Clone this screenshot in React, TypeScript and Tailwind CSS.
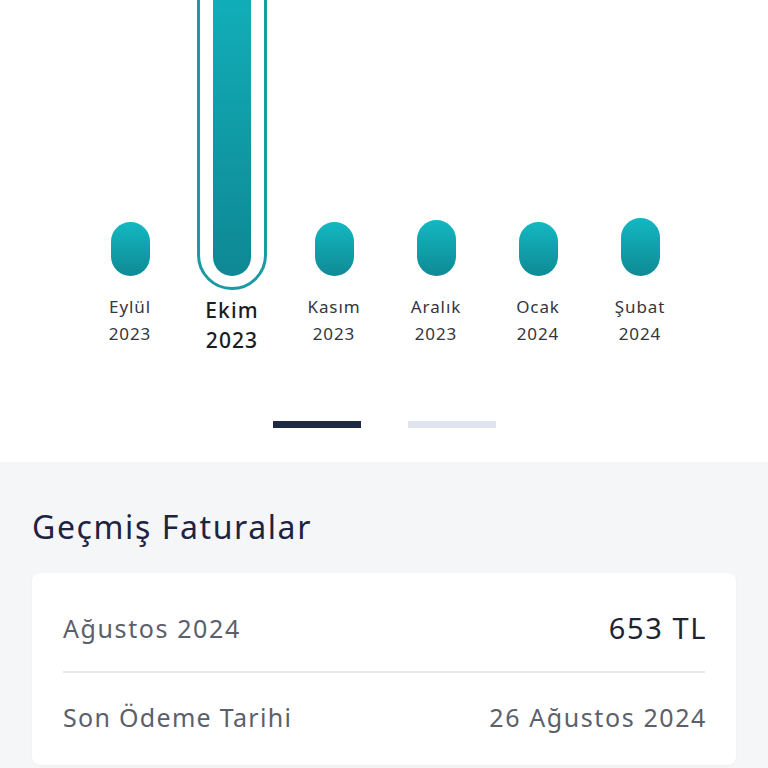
import React from "react";

type Month = { name: string; year: string; h: number; selected?: boolean };

const months: Month[] = [
  { name: "Eylül", year: "2023", h: 54 },
  { name: "Ekim", year: "2023", h: 330, selected: true },
  { name: "Kasım", year: "2023", h: 54 },
  { name: "Aralık", year: "2023", h: 56 },
  { name: "Ocak", year: "2024", h: 54 },
  { name: "Şubat", year: "2024", h: 58 },
];

function Bar({ m }: { m: Month }) {
  if (m.selected) {
    return (
      <div className="flex h-[360px] w-[70px] shrink-0 items-end justify-center rounded-b-full border-[3px] border-[#1a9aa3] px-[13px] pb-[11px]">
        <div
          className="w-full rounded-full bg-gradient-to-b from-[#12b5bf] to-[#0e8894]"
          style={{ height: m.h }}
        />
      </div>
    );
  }
  return (
    <div
      className="mb-[14px] w-[39px] rounded-full bg-gradient-to-b from-[#13b8c2] to-[#0e8a95]"
      style={{ height: m.h }}
    />
  );
}

export default function App() {
  return (
    <div
      className="h-[768px] w-[768px] overflow-hidden bg-white"
      style={{ fontFamily: '"Noto Sans", "Open Sans", sans-serif' }}
    >
      {/* chart */}
      <div className="h-[462px] bg-white">
        <div className="flex pl-[79px]">
          {months.map((m) => (
            <div key={m.name} className="flex w-[102px] flex-col items-center">
              <div className="flex h-[290px] items-end overflow-hidden">
                <Bar m={m} />
              </div>
              {m.selected ? (
                <div className="mt-[5px] text-center text-[21px] leading-[30px] font-medium tracking-[1.1px] text-[#1b1d24]">
                  <div>{m.name}</div>
                  <div>{m.year}</div>
                </div>
              ) : (
                <div className="mt-[3px] text-center text-[17px] leading-[27px] tracking-[0.9px] text-[#33363d]">
                  <div>{m.name}</div>
                  <div>{m.year}</div>
                </div>
              )}
            </div>
          ))}
        </div>
        <div className="mt-[66px] flex justify-center gap-[47px]">
          <div className="h-[7px] w-[88px] bg-[#1e2944]" />
          <div className="h-[7px] w-[88px] bg-[#e1e3ee]" />
        </div>
      </div>

      {/* past invoices */}
      <div className="h-[306px] bg-[#f5f6f8] px-[32px] pt-[45px]">
        <h2 className="text-[32px] leading-[40px] tracking-[1.6px] text-[#1e2440]">Geçmiş Faturalar</h2>
        <div className="mt-[26px] rounded-[8px] bg-white px-[31px] pt-[38px] pb-[31px] shadow-[0_1px_3px_rgba(0,0,0,0.04)]">
          <div className="flex items-center justify-between pb-[26px]">
            <span className="text-[25px] leading-[34px] tracking-[1.6px] text-[#5b606b]">Ağustos 2024</span>
            <span className="mr-[-2px] text-[29px] leading-[34px] tracking-[1.6px] text-[#1f2433]">653 TL</span>
          </div>
          <div className="h-[2px] bg-[#e8e9ec]" />
          <div className="flex items-center justify-between pt-[27px]">
            <span className="text-[25px] leading-[34px] tracking-[1.3px] text-[#5b606b]">Son Ödeme Tarihi</span>
            <span className="mr-[-2px] text-[25px] leading-[34px] tracking-[1.6px] text-[#5b606b]">26 Ağustos 2024</span>
          </div>
        </div>
      </div>
    </div>
  );
}
